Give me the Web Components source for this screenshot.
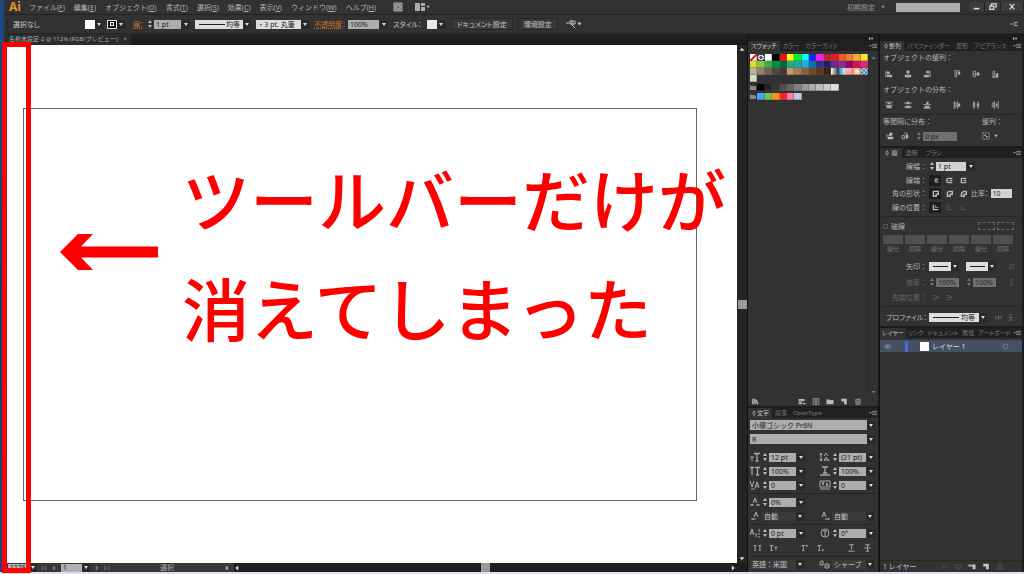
<!DOCTYPE html>
<html lang="ja">
<head>
<meta charset="utf-8">
<title>名称未設定-2</title>
<style>
html,body{margin:0;height:100%}
body{background:linear-gradient(#1c4a80,#123a74 60%,#26427e);font:7px/9px "Noto Sans","Noto Sans CJK JP",sans-serif;color:#c4c4c4;overflow:hidden}
</style>
</head>
<body>
<ai-app></ai-app>
<script>
const BASE = `*{box-sizing:border-box}
button,input,select{font:inherit;color:inherit;margin:0;padding:0;border:0;background:none;border-radius:0;outline-offset:-1px}
a{color:inherit}`;

function define(name, css, html, setup) {
  const t = document.createElement('template');
  customElements.define(name, class extends HTMLElement {
    constructor() { super(); this.attachShadow({mode: 'open'}); }
    connectedCallback() {
      if (this.shadowRoot.childNodes.length) return;
      t.innerHTML = `<style>${BASE}${css}</style>` + (typeof html === 'function' ? html(this) : html);
      this.shadowRoot.append(t.content.cloneNode(true));
      if (setup) setup(this);
    }
  });
}

/* Icons, drawn on a 10 x 10 grid */
const G = {
  alignL: '<path d="M1 1v8" /><path fill="currentColor" stroke="none" d="M2 2h4v3H2zM2 6h7v3H2z"/>',
  alignC: '<path d="M5 0v10"/><path fill="currentColor" stroke="none" d="M3 1h4v3H3zM1 6h8v3H1z"/>',
  alignR: '<path d="M9 1v8"/><path fill="currentColor" stroke="none" d="M4 1h4v3H4zM1 6h7v3H1z"/>',
  alignT: '<path d="M1 1h8M2.500 2.500h2v6h-2z"/><path fill="currentColor" stroke="none" d="M6 2h3v4H6z"/>',
  alignM: '<path d="M0 5h10M1.500 1.500h3v7h-3z"/><path fill="currentColor" stroke="none" d="M6 3h3v4H6z"/>',
  alignB: '<path d="M1 9h8M2.500 1.500h2v7h-2z"/><path fill="currentColor" stroke="none" d="M6 4h3v5H6z"/>',
  distT: '<path d="M0 1.500h10M0 5.500h10"/><path fill="currentColor" stroke="none" d="M3 2h4v2H3zM2 6h6v3H2z"/>',
  distM: '<path d="M0 2.500h10M0 7.500h10"/><path fill="currentColor" stroke="none" d="M3 1h4v3H3zM2 6h6v3H2z"/>',
  distB: '<path d="M0 4.500h10M0 9h10"/><path fill="currentColor" stroke="none" d="M4 1h3v3H4zM2 6h6v3H2z"/>',
  distL: '<path d="M1.500 0v10M5.500 0v10M2 2.500h2v5H2z"/><path fill="currentColor" stroke="none" d="M6 3h3v4H6z"/>',
  distC: '<path d="M2.500 0v10M7.500 0v10M1.500 2.500h2v5h-2z"/><path fill="currentColor" stroke="none" d="M6 3h3v4H6z"/>',
  distR: '<path d="M4.500 0v10M9 0v10M1.500 2.500h2v5h-2z"/><path fill="currentColor" stroke="none" d="M6 3h2v4H6z"/>',
  spaceV: '<path d="M2 4.500h5M1 3v3"/><path fill="currentColor" stroke="none" d="M4 1h4v3H4zM2 6h7v3H2z"/>',
  spaceH: '<path d="M1.500 4.500h3v4h-3z"/><path fill="currentColor" stroke="none" d="M6 3h3v5H6zM4 1h4v1H4z"/>',
  artboard: '<path stroke-dasharray="2 1" d="M1 1h8v8H1z"/><path fill="currentColor" stroke="none" d="M3 3h2v2H3zM5 5h2v2H5z"/>',
  capButt: '<path stroke-width="2" d="M4 3h5M4 7h5"/><path d="M3 5h4"/>',
  capRound: '<path stroke-width="2" d="M9 2H4a3 3 0 0 0 0 6h5M5 5h4"/>',
  capSquare: '<path stroke-width="2" d="M9 2H2v6h7M5 5h4"/>',
  joinM: '<path stroke-width="2" d="M2 9V2h7v4H6v3z"/>',
  joinR: '<path stroke-width="2" d="M2 9V5q0-3 3-3h4v4H6v3z"/>',
  joinB: '<path stroke-width="2" d="M2 9V5l3-3h4v4H6v3z"/>',
  posC: '<path stroke-width="2" d="M2 1v7h7"/><path d="M5 2v3h4"/>',
  posI: '<path d="M2 1v7h7M5 2v3"/>',
  posO: '<path d="M2 1v7h7M6 1h2"/>',
  swap: '<path d="M1 3h8M7 1l2 2M9 7H1M3 9L1 7"/>',
  link: '<path d="M3 4V2.500a2 2 0 0 1 4 0V4M3 6v1.500a2 2 0 0 0 4 0V6M5 3v4"/>',
  tip: '<path d="M1 2h5M1 5h8M6 3l3 2-3 2M1 8h5"/>',
  flipH: '<path d="M5 1v8M1 3l3 2-3 2zM9 3L6 5l3 2z"/>',
  flipV: '<path d="M1 5h8M3 1h4L5 4zM3 9h4L5 6z"/>',
  eye: '<path d="M0 5q5-5 10 0q-5 5-10 0z"/><circle cx="5" cy="5" r="1.500" fill="currentColor"/>',
  ring: '<circle cx="5" cy="5" r="3.500"/>',
  library: '<path stroke-width="2" d="M2 1v8M5 1v8M7 3l2 6"/>',
  kinds: '<path stroke-width="1.500" d="M1 2h3v2H1zM5 2h3v2H5zM1 6h3v2H1zM6 8h4"/>',
  options: '<path d="M1 1h8v8H1zM3 3h4M3 5h4M3 7h4"/>',
  folder: '<path fill="currentColor" stroke="none" d="M0 2h4l1 1h5v6H0z"/>',
  newItem: '<path fill="currentColor" stroke="none" d="M1 1h8v8H5V5H1z"/>',
  trash: '<path d="M1 2.500h8M4 1h2M2 3v6h6V3M4 4v4M6 4v4"/>',
  search: '<circle cx="6" cy="4" r="3"/><path d="M4 6L1 9"/>',
  mask: '<path d="M1 2h8v6H1z"/><circle cx="5" cy="5" r="1.500"/>',
  sublayer: '<path fill="currentColor" stroke="none" d="M0 2h3v2h1V2h6v7H6V5H0z"/>',
  bridge: '<path d="M1 1h8v8H1z" fill="#777"/><path d="M3 3h4v4H3z"/>',
  layout: '<path fill="currentColor" stroke="none" d="M0 1h5v8H0zM6 1h4v3H6zM6 5h4v4H6z"/>',
  pick: '<path d="M0 4h3M6 2v4M4 2h5v3H4zM6 6l3 3"/>',
  menu: '<path d="M4 3h6M4 5h6M4 7h6"/><path fill="currentColor" stroke="none" d="M0 4h4L2 6z"/>',
  dock: '<path d="M0 5h4M6 2v6M6 3h4M6 7h4"/>',
  tri: '<path fill="currentColor" stroke="none" d="M2 3h6L5 7z"/>',
  triR: '<path fill="currentColor" stroke="none" d="M3 1l5 4-5 4z"/>',
  triL: '<path fill="currentColor" stroke="none" d="M7 1L2 5l5 4z"/>',
  triU: '<path fill="currentColor" stroke="none" d="M1 8h8L5 3z"/>',
  triD: '<path fill="currentColor" stroke="none" d="M1 2h8L5 7z"/>',
  first: '<path d="M2 1v8M9 2L4 5l5 3z"/>',
  last: '<path d="M8 1v8M1 2l5 3-5 3z"/>',
  expand: '<path fill="currentColor" stroke="none" d="M0 2l4 3-4 3zM5 2l4 3-4 3z"/>',
  min: '<path stroke-width="2" d="M1 7h7"/>',
  restore: '<path stroke-width="1.500" d="M3 3V1h6v4H7M1 4h5v4H1z"/>',
  close: '<path stroke-width="1.500" d="M2 1l6 7M8 1L2 8"/>',
  size: '<path d="M0 5h4M2 5v4"/><path stroke-width="1.300" d="M4 1.500h6M7 1.500V9M5.500 9h3"/>',
  vscale: '<path stroke-width="1.300" d="M0 1.500h4M2 1.500V9M5 1.500h5M7.500 1.500V9M6 9h3"/>',
  leading: '<path d="M1 1v8M0 3l1-2 1 2M0 7l1 2 1-2M4 4l2-3 2 3M4 9l2-4 3 4M4 8h5"/>',
  hscale: '<path stroke-width="1.300" d="M2 1h6M5 1v6M3 7h4M0 9h10"/>',
  kern: '<path d="M0 1l2 6 2-6M5 8l2-6 2 6M6 6h3M1 9h4"/>',
  track: '<path d="M0 1h10v6H0zM2 2l1 3 1-3M6 6l1-3 1 3M0 9h10"/>',
  tsume: '<path d="M3 6l2-5 2 5M4 4h2M0 8h4M6 8h4M2 7v2M8 7v2"/>',
  akiL: '<path d="M4 6l2-5 2 5M5 4h2M1 8h5M3 7v2"/>',
  akiR: '<path d="M2 6l2-5 2 5M3 4h2M5 8h5M8 7v2"/>',
  base: '<path d="M0 7l2-6 2 6M1 5h2M6 9V5M9 1v3M8 6h2M8 9h2"/>',
  rotate: '<circle cx="5" cy="5" r="4"/><path d="M3 3h4M5 3v5"/>',
  caps: '<path stroke-width="1.200" d="M0 2h4M2 2v6M1 8h2M6 2h4M8 2v6M7 8h2"/>',
  small: '<path stroke-width="1.200" d="M0 2h5M2.500 2v6M1 8h3M6 4h4M8 4v4"/>',
  sup: '<path stroke-width="1.200" d="M1 2h5M3.500 2v6M2 8h3M7 2h2M8 1v3"/>',
  sub: '<path stroke-width="1.200" d="M1 2h5M3.500 2v6M2 8h3M7 8h2M8 6v3"/>',
  under: '<path stroke-width="1.200" d="M2 1h6M5 1v6M1 9h8"/>',
  strike: '<path stroke-width="1.200" d="M2 1h6M5 1v8M1 5h8M3 9h4"/>',
  aa: '<path d="M0 4l1-2 2 0v4H0V4M5 5h4v4H5V5M6 7h3"/>'
};
define('ai-icon', `:host{display:block;width:10px;height:10px;flex:none}svg{display:block;width:100%;height:100%;overflow:visible}`,
  el => `<svg viewBox="0 0 10 10" fill="none" stroke="currentColor" aria-hidden="true">${G[el.getAttribute('name')]}</svg>`);

/* Small down arrow button beside a value */
define('drop-arrow', `:host{display:block;flex:none;width:8px;height:9px}button{display:grid;place-items:center;width:100%;height:100%;background:#292929}
i{border:2px solid transparent;border-top:3px solid #ddd;border-bottom:0}`, '<button aria-label="▾"><i></i></button>');

/* Number box with up/down stepper and optional list arrow */
define('num-field', `:host{display:flex;align-items:center;height:9px;gap:1px}
:host([disabled]){opacity:.5}
.step{display:grid;gap:2px;width:6px;justify-items:center}
.step i{border:2px solid transparent;border-bottom:3px solid #bbb;border-top:0}
.step i+i{border-bottom:0;border-top:3px solid #bbb}
input{width:var(--w,27px);height:9px;background:#adadad;color:#222;padding:0 2px}
:host([light]) input{background:#d2d2d2}`,
  el => `${el.hasAttribute('plain') ? '' : '<span class="step"><i></i><i></i></span>'}<input aria-label="${el.getAttribute('label')}" value="${el.getAttribute('value')}" ${el.hasAttribute('disabled') ? 'disabled' : ''}>${el.hasAttribute('drop') ? '<drop-arrow></drop-arrow>' : ''}`);

/* Drop-down; "rule" draws a stroke sample before the text */
define('pick-list', `:host{display:flex;align-items:center;position:relative;height:var(--h,9px)}
select{appearance:none;flex:1;min-width:0;width:100%;height:100%;background:var(--bg,#adadad);color:var(--fg,#222);padding:0 2px 0 var(--pad,2px)}
hr{position:absolute;left:4px;top:4px;width:var(--rule,0);height:1px;margin:0;border:0;background:#222;pointer-events:none}`,
  el => `<select aria-label="${el.getAttribute('label')}"><option>${el.getAttribute('value')}</option></select>${el.hasAttribute('rule') ? '<hr>' : ''}<drop-arrow></drop-arrow>`);

define('ai-menubar', `:host{display:flex;align-items:center;height:15px;background:#323232;padding-left:5px;border-bottom:1px solid #222}
.logo{font:bold 12px/14px "Noto Sans",sans-serif;color:#e0962e;width:20px}
nav{display:flex;gap:9px;color:#b2b2b2}nav a{text-decoration:none;white-space:nowrap}
.tools{display:flex;align-items:center;gap:12px;margin-left:17px;color:#aaa}.tools span{display:flex}
.right{margin-left:auto;display:flex;align-items:center;color:#999}
.right input{width:64px;height:9px;background:#adadad;margin:0 9px 0 10px}
.win{display:flex;height:10px;align-self:flex-start}.win button{width:16px;height:9px;display:grid;place-items:center;color:#ddd;background:#3c3c3c;border-right:1px solid #222}.win button:last-child{width:23px}.win ai-icon{width:8px;height:8px}`,
  () => `<span class="logo">Ai</span><nav>${['ファイル(F','編集(E','オブジェクト(O','書式(T','選択(S','効果(C','表示(V','ウィンドウ(W','ヘルプ(H'].map(m => `<a href="#">${m.slice(0, -1)}<u>${m.slice(-1)}</u>)</a>`).join('')}</nav>
<div class="tools"><ai-icon name="bridge"></ai-icon><span><ai-icon name="layout"></ai-icon><ai-icon name="tri" style="width:6px"></ai-icon></span></div>
<div class="right"><span>初期設定</span><ai-icon name="tri" style="width:6px;margin-left:5px"></ai-icon><input type="search" aria-label="検索"><div class="win"><button aria-label="最小化"><ai-icon name="min"></ai-icon></button><button aria-label="元に戻す"><ai-icon name="restore"></ai-icon></button><button aria-label="閉じる"><ai-icon name="close"></ai-icon></button></div></div>`);

define('ai-controlbar', `:host{display:flex;align-items:center;height:19px;background:#323232;padding:0 6px 0 3px;white-space:nowrap;border-bottom:1px solid #262626;font-feature-settings:"palt"}
.grip{width:2px;height:11px;border-left:1px dotted #111;margin-right:4px}
.none{width:72px}.chip{width:10px;height:9px;background:#fff}.stroke{background:#111;border:1px solid #ddd;display:grid;place-items:center}.stroke i{width:4px;height:4px;border:1px solid #fff}
.st{color:#cc7422;text-decoration:underline dotted;margin-left:8px;width:14px}
pick-list,num-field{margin-right:5px}.op{width:34px;color:#cc7422}.op u{text-decoration-style:dotted}.sl{width:34px}
button.b{height:12px;padding:0 5px;background:#383838;border:1px solid #272727;margin-left:5px}
.end{margin-left:auto}`,
`<span class="grip"></span><span class="none">選択なし</span><span class="chip"></span><drop-arrow></drop-arrow><span class="chip stroke" style="margin-left:4px"><i></i></span><drop-arrow></drop-arrow>
<span class="st">線：</span><num-field label="線幅" value="1 pt" drop style="--w:27px"></num-field>
<pick-list label="可変線幅" value="均等" rule style="width:56px;--bg:#ddd;--rule:26px;--pad:31px"></pick-list>
<pick-list label="ブラシ" value="・ 3 pt. 丸筆" style="width:53px;--bg:#ddd;--pad:3px"></pick-list>
<span class="op"><u>不透明度</u>：</span><num-field plain drop label="不透明度" value="100%" style="--w:31px"></num-field>
<span class="sl">スタイル：</span><span class="chip" style="background:#e8e8e8"></span><drop-arrow></drop-arrow>
<button class="b" style="margin-left:6px">ドキュメント設定</button><button class="b">環境設定</button><ai-icon name="pick" style="margin-left:8px"></ai-icon><ai-icon name="tri" style="width:7px"></ai-icon><ai-icon class="end" name="dock" style="width:8px;height:8px"></ai-icon>`);

define('ai-annotation', `:host{display:flex;align-items:center;color:#f00;padding:34px 0 0 36px}
svg{flex:none;width:98px;height:38px;margin-right:24px}
p{margin:0;font:500 68px/109px "Noto Sans CJK JP",sans-serif;white-space:nowrap}`,
`<svg viewBox="0 0 98 38" fill="#f00" aria-hidden="true"><path d="M0 19L18 1H33L21 13.500H98V24.500H21L33 37H18z"/></svg><p><slot></slot></p>`);

define('ai-document', `:host{display:grid;grid-template:11px minmax(0,1fr) 9px/minmax(0,1fr) 10px;background:#1e1e1e;min-width:0}
.tabs{grid-column:1/3;display:flex;background:linear-gradient(#242424,#191919)}
.tab{display:flex;gap:6px;background:#2c2c2c;padding:0 4px 0 5px;font-size:6px;line-height:11px;color:#aaa;white-space:nowrap}
.canvas{background:#fff;padding:63px 40px 62px 19px}
.art{height:100%;border:1px solid #666}
ai-annotation{position:relative}
.vs{display:flex;flex-direction:column;align-items:center;justify-content:space-between;background:#242424;color:#ddd;padding:1px 0}
.thumb{width:9px;height:9px;background:#999}
.status{display:flex;align-items:center;background:#383838;color:#aaa;width:230px;height:9px}
.status input{height:8px;background:#b0b0b0;color:#222;padding:0 2px}
.bottom{display:flex;background:#1f1f1f;color:#ddd}
.hs{flex:1;display:flex;align-items:center;justify-content:space-between;padding-right:1px}
ai-icon{width:6px;height:6px}.dim{color:#777;margin-left:4px}`,
`<div class="tabs"><div class="tab"><span>名称未設定-2 @ 112% (RGB/プレビュー)</span><span>×</span></div></div>
<div class="canvas"><div class="art"><ai-annotation><slot></slot></ai-annotation></div></div>
<div class="vs"><ai-icon name="triU"></ai-icon><span class="thumb"></span><ai-icon name="triD"></ai-icon></div>
<div class="bottom"><div class="status"><input aria-label="ズーム" value="112%" style="width:19px;margin-left:4px"><drop-arrow style="margin-left:2px"></drop-arrow><ai-icon class="dim" name="first"></ai-icon><ai-icon class="dim" name="triL"></ai-icon><input aria-label="アートボード" value="1" style="width:21px;margin-left:4px"><drop-arrow></drop-arrow><ai-icon class="dim" name="triR"></ai-icon><ai-icon class="dim" name="last"></ai-icon><span style="margin:0 auto">選択</span><ai-icon name="triR" style="margin-right:4px"></ai-icon></div>
<div class="hs"><ai-icon name="triL"></ai-icon><span class="thumb"></span><ai-icon name="triR"></ai-icon></div></div>`);

/* Panel with a tab strip; the first tab is the open one */
define('ai-panel', `:host{display:flex;flex-direction:column;background:#323232;min-height:0;border-bottom:2px solid #1c1c1c}
.tabs{display:flex;height:10px;background:#212121;font-size:6px;line-height:10px;color:#777;white-space:nowrap;font-feature-settings:"palt"}
.tabs button{padding:0 var(--tp,4px);line-height:10px}.tabs button:first-child{background:#323232;color:#c8c8c8}
.tabs ai-icon{width:8px;height:8px;margin:1px 1px 0 auto;color:#999}
.body{flex:1;display:flex;flex-direction:column;min-height:0}`,
 el => `<div class="tabs" role="tablist">${el.getAttribute('tabs').split(',').map((t, i) => `<button role="tab" aria-selected="${!i}">${t}</button>`).join('')}<ai-icon name="menu"></ai-icon></div><div class="body"><slot></slot></div>`);

const SW = [
 ['none','reg','#fff','#000','#f01010','#ff0','#00f030','#0ff','#1028f8','#f020f0','#c02028','#e81c24','#f05a24','#f08030','#f8a838','#f8e830'],
 ['#d8e020','#88c840','#38b048','#009045','#006838','#20b078','#20a89c','#28a8e0','#0870b8','#303090','#201c60','#682c90','#902890','#98005c','#d01458','#ec2078'],
 ['#c0b098','#988070','#706058','#504640','#403830','#c49a6c','#a47c50','#8a6038','#74481f','#603814','#402010','linear-gradient(90deg,#fff,#222)','linear-gradient(90deg,#2088c0,#fff)','linear-gradient(135deg,#fbc,#f88)','radial-gradient(#fff,#f08030)','repeating-conic-gradient(#3a78b8 0 25%,#bde 0 50%) 0/4px 4px'],
 ['#d0e0c8']];
const GREY = ['#000','#222','#333','#4d4d4d','#666','#808080','#999','#aaa','#bbb','#ccc','#e0e0e0'];
const BRIGHT = ['#3fa9f5','#7ac943','#ff931e','#ff1d25','#ff7bac','#bdccd4'];
const sw = c => c === 'none' ? '<i style="background:linear-gradient(to bottom right,#fff 42%,#e22 42% 58%,#fff 58%)"></i>' : c === 'reg' ? '<i style="background:radial-gradient(#555 30%,#ddd 32% 50%,#444 52%)"></i>' : `<i style="background:${c}"></i>`;
define('ai-swatches', `:host{flex:1;display:flex;flex-direction:column}
.list{flex:1;display:grid;grid-template-columns:1fr 10px}
.sw{padding:3px 0 0 2px}.row{display:grid;grid-template-columns:repeat(16,1fr);grid-auto-rows:7px}.row i{box-shadow:inset -1px -1px #5556}
.grp{margin-top:2px;color:#888}.grp ai-icon{width:6px;height:7px}
.bar{display:flex;flex-direction:column;justify-content:space-between;align-items:center;padding:4px 0 1px;color:#777;border-left:1px solid #2a2a2a}.bar ai-icon{width:5px;height:5px}
.foot{display:flex;gap:6px;height:10px;align-items:center;padding:0 16px 0 3px;color:#bbb}.foot ai-icon{width:8px;height:7px}`,
`<div class="list"><div class="sw">${SW.map(r => `<div class="row">${r.map(sw).join('')}</div>`).join('')}
<div class="row grp"><ai-icon name="folder"></ai-icon>${GREY.map(sw).join('')}</div><div class="row grp"><ai-icon name="folder"></ai-icon>${BRIGHT.map(sw).join('')}</div></div>
<div class="bar"><ai-icon name="triU"></ai-icon><ai-icon name="triD"></ai-icon></div></div>
<div class="foot"><ai-icon name="library" style="margin-right:auto"></ai-icon><ai-icon name="kinds"></ai-icon><ai-icon name="options"></ai-icon><ai-icon name="folder"></ai-icon><ai-icon name="newItem"></ai-icon><ai-icon name="trash"></ai-icon></div>`);

const cf = (icon, label, value) => `<div class="c"><ai-icon name="${icon}"></ai-icon><num-field drop label="${label}" value="${value}"></num-field></div>`;
define('ai-character', `:host{display:block;padding:2px 3px 1px 2px}
.f{--h:10px;margin-bottom:4px}.r{display:grid;grid-template-columns:70px 1fr;height:14px;align-items:center}
.c{display:flex;align-items:center;gap:2px;color:#a8a8a8}hr{border:0;border-top:1px solid #262626;margin:1px 0}
.dark{--bg:#3a3a3a;--fg:#c4c4c4;width:42px}.t{display:flex;height:16px;align-items:center;gap:7px;padding:0 3px;color:#a8a8a8}.t ai-icon{width:9px;height:8px}`,
`<pick-list class="f" label="フォント" value="小塚ゴシック Pr6N"></pick-list><pick-list class="f" label="スタイル" value="R"></pick-list>
<div class="r" style="margin-top:6px">${cf('size','文字サイズ','12 pt')}${cf('leading','行送り','(21 pt)')}</div>
<div class="r">${cf('vscale','垂直比率','100%')}${cf('hscale','水平比率','100%')}</div>
<div class="r">${cf('kern','カーニング','0')}${cf('track','トラッキング','0')}</div><hr>
<div class="r">${cf('tsume','文字ツメ','0%')}</div>
<div class="r"><div class="c"><ai-icon name="akiL"></ai-icon><pick-list class="dark" label="アキ左" value="自動"></pick-list></div><div class="c"><ai-icon name="akiR"></ai-icon><pick-list class="dark" label="アキ右" value="自動"></pick-list></div></div><hr>
<div class="r">${cf('base','ベースライン','0 pt')}${cf('rotate','回転','0°')}</div>
<div class="t"><ai-icon name="caps"></ai-icon><ai-icon name="small"></ai-icon><ai-icon name="sup" style="margin-left:auto"></ai-icon><ai-icon name="sub"></ai-icon><ai-icon name="under" style="margin-left:auto"></ai-icon><ai-icon name="strike"></ai-icon></div><hr style="margin:0">
<div class="r"><pick-list class="dark" style="width:54px" label="言語" value="英語：米国"></pick-list><div class="c"><ai-icon name="aa"></ai-icon><pick-list class="dark" label="アンチエイリアス" value="シャープ"></pick-list></div></div>`);

const ib = (...n) => n.map(x => `<button aria-label="${x}"><ai-icon name="${x}"></ai-icon></button>`).join('');
define('ai-align', `:host{display:block;padding:0 3px;color:#b8b8b8;height:95px}
.l{height:14px;line-height:14px}.i{display:grid;grid-template-columns:repeat(3,18px) 10px repeat(3,18px);gap:0 1px;height:18px;align-items:center;color:#aaa}
.i button{display:grid;place-items:center;width:11px}.i button:nth-child(4){grid-column:5}ai-icon{width:8px;height:8px}
.s{display:grid;grid-template-columns:99px 1fr;border-top:1px solid #262626;margin-top:1px}.row{display:flex;gap:6px;align-items:center;height:14px}.row button{width:9px}`,
`<div class="l">オブジェクトの整列：</div><div class="i">${ib('alignL','alignC','alignR','alignT','alignM','alignB')}</div>
<div class="l">オブジェクトの分布：</div><div class="i" style="height:16px">${ib('distT','distM','distB','distL','distC','distR')}</div>
<div class="s"><div><div class="l">等間隔に分布：</div><div class="row" style="padding-left:3px">${ib('spaceV','spaceH')}<num-field disabled label="間隔" value="0 px" style="--w:34px"></num-field></div></div><div><div class="l">整列：</div><div class="row" style="gap:2px">${ib('artboard')}<ai-icon name="tri" style="width:6px"></ai-icon></div></div></div>`);

define('ai-stroke', `:host{display:block;padding:1px 3px 0;height:168px;color:#b8b8b8}
.r{display:flex;align-items:center;height:14px;gap:2px}.r>label,.r>.lb{width:44px;display:flex;justify-content:flex-end;white-space:nowrap}
.pr{font-feature-settings:"palt"}
button{width:12px;height:11px;display:grid;place-items:center}button.on{background:#1e1e1e}ai-icon{width:7px;height:7px}hr{border:0;border-top:1px solid #262626;margin:2px 0}
.d{display:grid;grid-template-columns:repeat(6,20px);gap:1px 2px;text-align:center;color:#777;font-size:6px;line-height:9px}.d input{width:20px;height:9px;background:#505050}
.off{color:#666}.r>.chk{width:auto;align-items:center;gap:3px}.chk input{appearance:none;width:5px;height:5px;border:1px solid #555}
button.dash{width:17px;height:8px;border:1px dashed #666}
.big{height:16px}`,
`<div class="r"><span class="lb">線幅：</span><num-field light drop label="線幅" value="1 pt" style="--w:30px"></num-field></div>
<div class="r"><span class="lb">線端：</span><button class="on" aria-label="線端なし"><ai-icon name="capButt"></ai-icon></button>${ib('capRound','capSquare')}</div>
<div class="r" style="height:13px"><span class="lb">角の形状：</span><button class="on" aria-label="マイター"><ai-icon name="joinM"></ai-icon></button>${ib('joinR','joinB')}<span class="pr">比率：</span><num-field plain light label="比率" value="10" style="--w:21px"></num-field></div>
<div class="r"><span class="lb">線の位置：</span><button class="on" aria-label="中央"><ai-icon name="posC"></ai-icon></button><span class="r off">${ib('posI','posO')}</span></div><hr>
<div class="r"><label class="chk"><input type="checkbox">破線</label><span class="r off" style="margin-left:auto;padding-right:5px"><button class="dash" aria-label="長さを保持"></button><button class="dash" aria-label="先端に整列"></button></span></div>
<div class="d" style="margin-top:2px">${'<input disabled aria-label="線分と間隔">'.repeat(6)}${'<span>線分</span><span>間隔</span>'.repeat(3)}</div>
<div class="r big" style="margin-top:4px"><span class="lb">矢印：</span><pick-list label="始点" value="" rule style="width:30px;--bg:#ddd;--rule:15px"></pick-list><pick-list label="終点" value="" rule style="width:30px;--bg:#ddd;--rule:15px;margin-left:5px"></pick-list><ai-icon name="swap" style="margin-left:10px;color:#666"></ai-icon></div>
<div class="r big"><span class="lb off">倍率：</span><num-field disabled label="始点倍率" value="100%" style="--w:23px"></num-field><num-field disabled label="終点倍率" value="100%" style="--w:23px;margin-left:5px"></num-field><ai-icon name="link" style="margin-left:10px;color:#666"></ai-icon></div>
<div class="r off"><span class="lb">先端位置：</span>${ib('tip','tip')}</div><hr>
<div class="r big"><span class="lb pr">プロファイル：</span><pick-list label="プロファイル" value="均等" rule style="width:58px;--bg:#ddd;--rule:26px;--pad:32px"></pick-list><span class="r off" style="margin-left:auto;gap:5px;padding-right:5px"><ai-icon name="flipH"></ai-icon><ai-icon name="flipV"></ai-icon></span></div>`);

define('ai-layers', `:host{flex:1;display:flex;flex-direction:column}
.row{display:flex;align-items:center;height:12px;margin-top:2px;background:#475060;color:#ddd}.row>*{flex:none}
.row ai-icon{width:7px;height:7px;color:#8a94a8}.bar{width:3px;height:11px;background:#4a68e0;margin:0 12px 0 14px}.th{width:9px;height:9px;background:#fff;margin-right:3px}
.foot{margin-top:auto;display:flex;align-items:center;gap:6px;height:12px;padding:0 18px 0 3px;border-top:1px solid #282828}.foot ai-icon{width:8px;height:7px}.off{color:#555}`,
`<div class="row"><ai-icon name="eye" style="margin-left:4px"></ai-icon><span class="bar"></span><span class="th"></span><span>レイヤー 1</span><ai-icon name="ring" style="margin:0 13px 0 auto"></ai-icon></div>
<div class="foot"><span style="margin-right:auto">1 レイヤー</span><ai-icon class="off" name="search"></ai-icon><ai-icon class="off" name="mask"></ai-icon><ai-icon name="sublayer"></ai-icon><ai-icon name="newItem"></ai-icon><ai-icon class="off" name="trash"></ai-icon></div>`);

define('ai-app', `:host{position:relative;display:flex;flex-direction:column;height:100vh;padding-left:4px;border-bottom:2px solid #dde2ea;box-sizing:border-box}
.work{flex:1;min-height:0;display:grid;grid-template-columns:minmax(0,1fr) 132px 145px;background:#1c1c1c}
.col{display:flex;flex-direction:column;min-height:0;border-left:1px solid #111;padding-right:1px}
.col:last-child{padding-right:2px}
.col>ai-icon{width:5px;height:5px;margin:2px 4px 0 auto;color:#bbb}.col>ai-panel:last-child{border-bottom:0}
.grow{flex:1}
.frame{position:absolute;left:2px;top:42px;bottom:-1px;width:29px;border:5px solid #f00;pointer-events:none}`,
`<ai-menubar></ai-menubar><ai-controlbar></ai-controlbar>
<div class="work"><ai-document>ツールバーだけが<br>消えてしまった</ai-document>
<div class="col"><ai-icon name="expand"></ai-icon><ai-panel class="grow" style="--tp:3px" tabs="スウォッチ,カラー,カラーガイド"><ai-swatches></ai-swatches></ai-panel><ai-panel style="--tp:3px" tabs="◊文字,段落,OpenType"><ai-character></ai-character></ai-panel></div>
<div class="col"><ai-icon name="expand"></ai-icon><ai-panel style="--tp:3px" tabs="◊整列,パスファインダー,変形,アピアランス"><ai-align></ai-align></ai-panel><ai-panel tabs="◊ 線,透明,ブラシ"><ai-stroke></ai-stroke></ai-panel><ai-panel class="grow" style="--tp:2px" tabs="レイヤー,リンク,ドキュメント,属性,アートボード"><ai-layers></ai-layers></ai-panel></div></div>
<div class="frame"></div>`);
</script>
</body>
</html>
